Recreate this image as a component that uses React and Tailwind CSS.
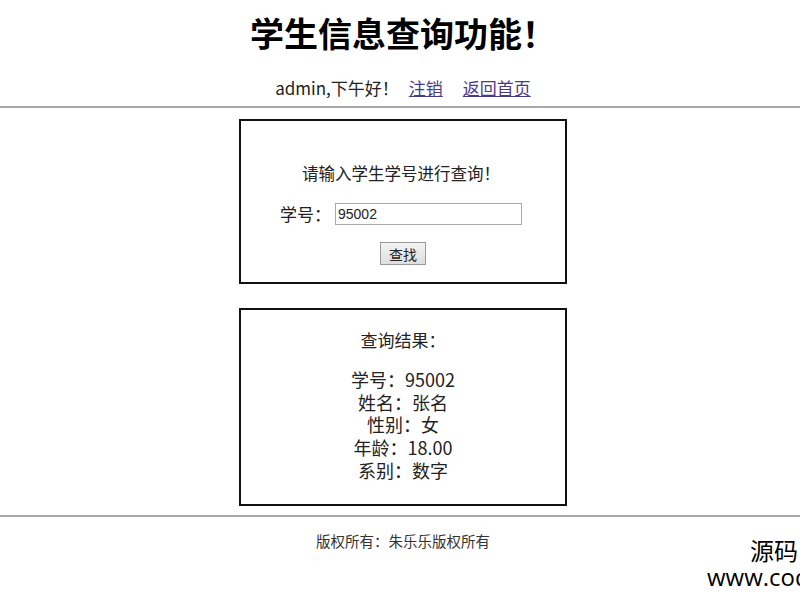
import React from 'react'

function App() {
  const result = [
    ['学号', '95002'],
    ['姓名', '张名'],
    ['性别', '女'],
    ['年龄', '18.00'],
    ['系别', '数字'],
  ]

  return (
    <div className="relative w-[800px] h-[600px] overflow-hidden bg-white text-[#222] font-['Noto_Sans_CJK_SC','Noto_Sans',sans-serif]">
      {/* Header */}
      <h1 className="pt-[12px] text-center text-[34px] leading-[42px] font-bold text-black pl-[6px]">学生信息查询功能！</h1>
      <div className="mt-[22px] flex justify-center items-center text-[17px] leading-[24px] pl-[6px]">
        <span>admin,下午好！</span>
        <a href="#" className="ml-[10px] underline text-[#4b3a8c]">注销</a>
        <a href="#" className="ml-[20px] underline text-[#4b3a8c]">返回首页</a>
      </div>
      <div className="mt-[6px] h-[2px] bg-[#a8a8a8]"></div>

      {/* Search box */}
      <div className="ml-[239px] mt-[11px] w-[328px] h-[165px] border-2 border-[#111] flex flex-col items-center">
        <p className="mt-[40px] text-[16.5px] leading-[24px] pr-[4px]">请输入学生学号进行查询！</p>
        <div className="mt-[18px] flex items-center -ml-[4px]">
          <span className="text-[17px] leading-[22px]">学号：</span>
          <input
            defaultValue="95002"
            className="ml-[4px] w-[187px] h-[22px] border border-[#a9a9a9] px-[2px] text-[14px] leading-[18px] font-['Liberation_Sans',sans-serif] outline-none"
          />
        </div>
        <button className="mt-[17px] w-[46px] h-[23px] border border-[#9a9a9a] bg-gradient-to-b from-[#f4f4f4] to-[#dedede] text-[14px] leading-[20px]">
          查找
        </button>
      </div>

      {/* Result box */}
      <div className="ml-[239px] mt-[24px] w-[328px] h-[198px] border-2 border-[#111] flex flex-col items-center">
        <p className="mt-[18px] text-[17px] leading-[24px]">查询结果：</p>
        <div className="mt-[16px] flex flex-col items-center text-[18px] leading-[22.7px]">
          {result.map(([k, v]) => (
            <div key={k}>{k}：{v}</div>
          ))}
        </div>
      </div>

      {/* Footer */}
      <div className="mt-[9px] h-[2px] bg-[#a8a8a8]"></div>
      <p className="mt-[15px] text-center text-[14.5px] leading-[18px] text-[#333] pl-[6px]">版权所有：朱乐乐版权所有</p>

      {/* Watermark */}
      <div className="absolute left-[707px] top-[536px] whitespace-nowrap text-black">
        <div className="ml-[43px] text-[24px] leading-[28px]">源码</div>
        <div className="text-[24px] leading-[26px] font-['Open_Sans',sans-serif]">www.code</div>
      </div>
    </div>
  )
}

export default App
